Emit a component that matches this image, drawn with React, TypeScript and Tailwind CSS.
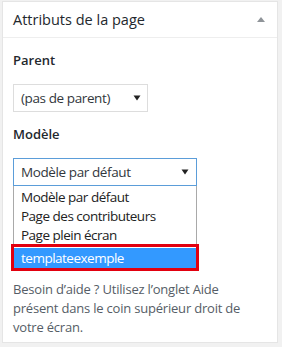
import React from "react";

const font = { fontFamily: '"Open Sans", "Noto Sans", sans-serif' };

function Caret() {
  return (
    <svg width="8" height="6" viewBox="0 0 8 6" className="shrink-0">
      <path d="M0.5 0.5 L7.5 0.5 L4 5.5 Z" fill="#222" />
    </svg>
  );
}

const options = [
  "Modèle par défaut",
  "Page des contributeurs",
  "Page plein écran",
  "templateexemple",
];

export default function App() {
  return (
    <div
      className="w-[282px] h-[347px] bg-[#f1f1f1] pl-[2px] pt-[1px] pr-[4px] pb-[4px]"
      style={font}
    >
      <div className="h-full border border-[#e5e5e5] bg-white flex flex-col">
        {/* header */}
        <div className="h-[36px] shrink-0 flex items-center justify-between pl-[10px] pr-[12px] border-b border-[#eeeeee]">
          <span className="text-[14.5px] text-[#23282d]">Attributs de la page</span>
          <svg width="8" height="5" viewBox="0 0 8 5">
            <path d="M0 5 L4 0 L8 5 Z" fill="#8f9499" />
          </svg>
        </div>

        <div className="pl-[10px] pr-[10px] pt-[13px] flex flex-col">
          <p className="text-[13px] leading-[18px] font-semibold text-[#23282d]">Parent</p>

          <div className="mt-[15px] w-[135px] h-[28px] border border-[#dddddd] flex items-center justify-between pl-[7px] pr-[6px] text-[13.5px] tracking-[-0.4px] text-[#32373c]">
            <span>(pas de parent)</span>
            <Caret />
          </div>

          <p className="mt-[13px] text-[13px] leading-[18px] font-semibold text-[#23282d]">Modèle</p>

          <div className="mt-[15px] w-[184px] flex flex-col">
            <div className="h-[28px] border border-[#5b9dd9] flex items-center justify-between pl-[7px] pr-[7px] text-[13.5px] tracking-[-0.4px] text-[#32373c]">
              <span>Modèle par défaut</span>
              <Caret />
            </div>
            <div className="relative border border-t-0 border-[#a9a9a9] pt-[2px] pb-[1px] text-[13.5px] tracking-[-0.5px] text-[#222]">
              {options.map((o, i) => {
                const last = i === options.length - 1;
                return (
                  <div
                    key={o}
                    className={
                      last
                        ? "h-[20px] leading-[20px] mt-[3px] pl-[7px] bg-[#3399ff] text-white"
                        : "h-[19px] leading-[19px] pl-[7px]"
                    }
                  >
                    {o}
                  </div>
                );
              })}
              <div className="absolute left-[-3px] right-[-3px] bottom-[-2px] h-[27px] border-[3px] border-[#e2000f] pointer-events-none" />
            </div>
          </div>

          <p className="mt-[10px] max-w-[250px] text-[13px] leading-[19px] tracking-[-0.2px] text-[#555d66]">
            Besoin d’aide ? Utilisez l’onglet Aide présent dans le coin supérieur droit de votre écran.
          </p>
        </div>
      </div>
    </div>
  );
}
